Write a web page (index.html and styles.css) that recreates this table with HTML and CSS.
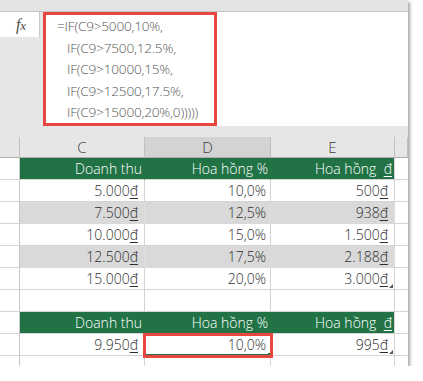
FILE: index.html
```html
<!DOCTYPE html>
<html lang="vi">
<head>
    <meta charset="utf-8" />
    <title>Hoa hồng theo doanh thu</title>
    <link rel="stylesheet" href="styles.css">
</head>
<body>
    <div class="xl-window">
        <div class="xl-ribbon"></div>

        <!-- thanh công thức -->
        <div class="xl-formula">
            <div class="xl-fx"><i>f</i><i class="x">x</i></div>
            <div class="xl-input">
                <div class="xl-formula-text">
                    <div>=IF(C9&gt;5000,10%,</div>
                    <div class="ind">IF(C9&gt;7500,12.5%,</div>
                    <div class="ind">IF(C9&gt;10000,15%,</div>
                    <div class="ind">IF(C9&gt;12500,17.5%,</div>
                    <div class="ind">IF(C9&gt;15000,20%,0)))))</div>
                </div>
            </div>
        </div>

        <!-- bảng tính -->
        <div class="xl-sheet">
            <div class="hd corner"></div>
            <div class="hd">C</div>
            <div class="hd sel">D</div>
            <div class="hd">E</div>
            <div class="hd"></div>

            <div class="rh"></div>
            <div class="c th">Doanh thu</div>
            <div class="c th">Hoa hồng %</div>
            <div class="c th">Hoa hồng&nbsp; <u>đ</u></div>
            <div class="c"></div>

            <div class="rh"></div>
            <div class="c cur">5.000<u>đ</u></div>
            <div class="c">10,0%</div>
            <div class="c cur">500<u>đ</u></div>
            <div class="c"></div>

            <div class="rh"></div>
            <div class="c band cur">7.500<u>đ</u></div>
            <div class="c band">12,5%</div>
            <div class="c band cur">938<u>đ</u></div>
            <div class="c"></div>

            <div class="rh"></div>
            <div class="c cur">10.000<u>đ</u></div>
            <div class="c">15,0%</div>
            <div class="c cur">1.500<u>đ</u></div>
            <div class="c"></div>

            <div class="rh"></div>
            <div class="c band cur">12.500<u>đ</u></div>
            <div class="c band">17,5%</div>
            <div class="c band cur">2.188<u>đ</u></div>
            <div class="c"></div>

            <div class="rh"></div>
            <div class="c cur">15.000<u>đ</u></div>
            <div class="c">20,0%</div>
            <div class="c cur mark">3.000<u>đ</u></div>
            <div class="c"></div>

            <div class="rh"></div>
            <div class="c"></div>
            <div class="c"></div>
            <div class="c"></div>
            <div class="c"></div>

            <div class="rh"></div>
            <div class="c th">Doanh thu</div>
            <div class="c th">Hoa hồng %</div>
            <div class="c th">Hoa hồng&nbsp; <u>đ</u></div>
            <div class="c"></div>

            <div class="rh"></div>
            <div class="c cur">9.950<u>đ</u></div>
            <div class="c active">10,0%<span class="hl"></span></div>
            <div class="c cur mark">995<u>đ</u></div>
            <div class="c"></div>

            <div class="rh last"></div>
            <div class="c last"></div>
            <div class="c last"></div>
            <div class="c last"></div>
            <div class="c last"></div>
        </div>
    </div>
</body>
</html>
```

FILE: styles.css
```css
* {margin: 0;padding: 0;box-sizing: border-box;}
body {background: #fff;font: 300 14px/1 "Open Sans", "Noto Sans", Arial, sans-serif;}

.xl-window {width: 408px;box-shadow: 2px 2px 3px rgba(0,0,0,0.35);background: #e6e6e6;}
.xl-ribbon {height: 12px;background: #e3e3e3;border-bottom: 1px solid #c6c6c6;}

/*thanh công thức*/
.xl-formula {display: flex;gap: 3px;height: 114px;background: #e6e6e6;}
.xl-fx {width: 40px;height: 25px;background: #fff;border-right: 1px solid #c6c6c6;display: flex;justify-content: center;align-items: center;padding-left: 3px;color: #4a4a4a;font: italic 16px "Liberation Serif", serif;}
.xl-fx .x {font-size: 13px;margin-top: 3px;}
.xl-input {flex: 1;background: #fff;}
.xl-formula-text {width: 174px;height: 114px;border: 3px solid #e8463f;padding-left: 11px;color: #555;font-size: 13.6px;line-height: 21.6px;white-space: nowrap;letter-spacing: -0.2px;}
.xl-formula-text .ind {padding-left: 10px;}

/*lưới*/
.xl-sheet {display: grid;grid-template-columns: 20px 125px 126px 124px 13px;padding-top: 11px;background: #e6e6e6;color: #2e2e2e;}
.hd {height: 21px;border-bottom: 1px solid #adadad;border-right: 1px solid #bfbfbf;text-align: center;line-height: 20px;font-size: 15px;color: #3c3c3c;}
.hd:last-child {border-right: 0;}
.hd.sel {background: #d3d3d3;}
.rh {height: 22px;background: #fff;border-right: 1px solid #c6c6c6;border-bottom: 1px solid #d4d4d4;}
.c {position: relative;height: 22px;background: #fff;border-right: 1px solid #d4d4d4;border-bottom: 1px solid #d4d4d4;text-align: right;padding-right: 4px;line-height: 22px;white-space: nowrap;}
.c.cur {padding-right: 6px;}
.c.th {background: #217346;color: #fff;border-right-color: #217346;padding-right: 2px;}
.c.th:nth-child(5n+4) {border-right-color: #d4d4d4;}
.c.band {background: #d9d9d9;border-right-color: #dedede;border-bottom-color: #d9d9d9;}
.c:nth-child(5n) {border-right: 0;}
.c u {text-decoration: underline;text-underline-offset: 2px;}
.rh.last, .c.last {height: 10px;border-bottom: 0;}

/*góc đánh dấu của ô*/
.c.mark::after {content: "";position: absolute;right: 1px;bottom: 1px;border-left: 4px solid transparent;border-bottom: 4px solid #555;}

/*ô đang chọn*/
.c.active {border-bottom: 2px solid #217346;}
.c.active::after {content: "";position: absolute;right: -2px;bottom: -3px;width: 4px;height: 4px;background: #217346;}
.c.active .hl {position: absolute;left: -2px;top: -1px;right: -3px;bottom: -4px;border: 3px solid #e8463f;z-index: 2;}
```
